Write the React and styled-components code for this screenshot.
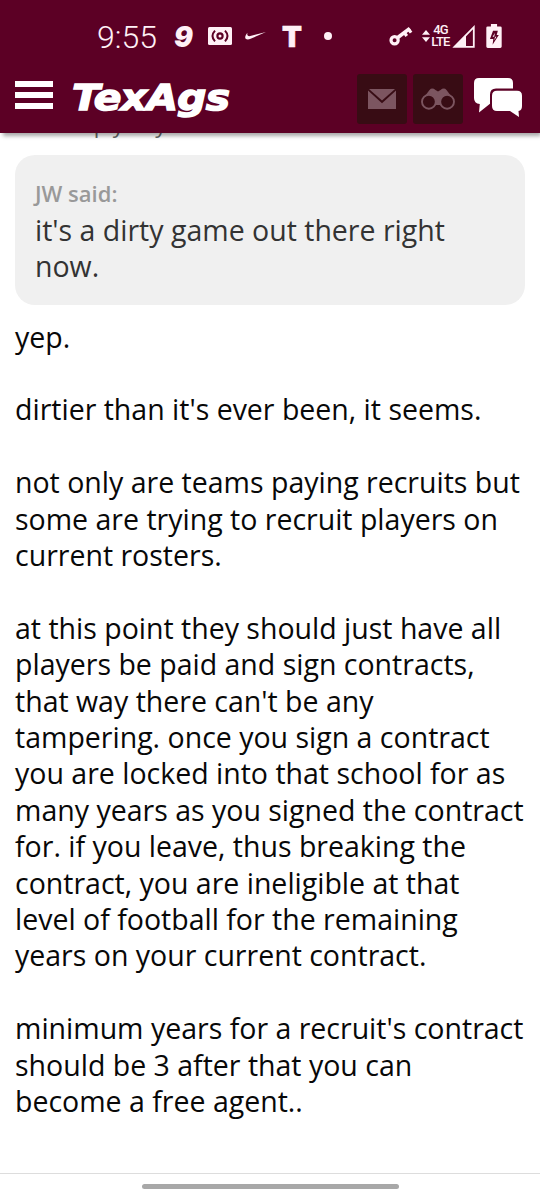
import React from 'react'
import styled, { createGlobalStyle } from 'styled-components'

const paragraphs = [
  ['yep.'],
  ["dirtier than it's ever been, it seems."],
  [
    'not only are teams paying recruits but',
    'some are trying to recruit players on',
    'current rosters.',
  ],
  [
    'at this point they should just have all',
    'players be paid and sign contracts,',
    "that way there can't be any",
    'tampering. once you sign a contract',
    'you are locked into that school for as',
    'many years as you signed the contract',
    'for. if you leave, thus breaking the',
    'contract, you are ineligible at that',
    'level of football for the remaining',
    'years on your current contract.',
  ],
  [
    "minimum years for a recruit's contract",
    'should be 3 after that you can',
    'become a free agent..',
  ],
]

const BroadcastIcon = () => (
  <svg width="24" height="18" viewBox="0 0 24 18" fill="none">
    <rect width="24" height="18" rx="1.5" fill="#fff0f6" />
    <circle cx="12" cy="9" r="2.6" stroke="#5c0025" strokeWidth="2.2" />
    <path d="M7 3.600Q2 9 7 14.400M17 3.600Q22 9 17 14.400" stroke="#5c0025" strokeWidth="2" />
  </svg>
)

const SwooshIcon = () => (
  <svg width="21" height="8" viewBox="0 0 21 8" fill="#fff0f6">
    <path d="M21 0 5.6 6.8C3.300 7.800.4 7.800.2 5.500.1 3.900 1.200 2.200 2.600.7 1.800 2.700 2.300 4.500 5.200 4.100Z" />
  </svg>
)

const KeyIcon = () => (
  <svg width="24" height="22" viewBox="0 0 24 22" fill="none" stroke="#fff0f6">
    <circle cx="5.600" cy="15.200" r="3.600" strokeWidth="3.200" />
    <path d="M8.500 12.800 20.800 3.400" strokeWidth="3.600" />
    <path d="M15.200 7.500l2.600 3.500M19.500 4.200l2.600 3.400" strokeWidth="3.200" />
  </svg>
)

const DataArrows = () => (
  <svg width="8" height="12" viewBox="0 0 8 12" fill="#fff0f6">
    <path d="M4 0l4 4.800H0zM4 12l4-4.800H0z" />
  </svg>
)

const SignalIcon = () => (
  <svg width="23" height="23" viewBox="0 0 23 23">
    <path d="M21.800 2.200V21.800H2.500z" fill="none" stroke="#fff0f6" strokeWidth="1.800" />
    <path d="M14 9.500V22H1.500z" fill="#fff0f6" />
  </svg>
)

const BatteryIcon = () => (
  <svg width="16" height="24" viewBox="0 0 16 25">
    <path d="M4.800 0h6.400v2.500h3.300q1.500 0 1.500 1.500v19.500q0 1.500-1.500 1.500h-13q-1.500 0-1.500-1.500V4q0-1.500 1.500-1.500h3.300z" fill="#fff0f6" />
    <path d="M7 7h5L10.800 11.500h2.200L6.500 21.500l.8-6H3.800z" fill="#5c0025" />
    <path d="M9 9.500 6.500 13.300h2.600L8.300 17l2.200-3.800H8.200z" fill="#fff0f6" />
  </svg>
)

const MailIcon = () => (
  <svg width="28" height="20" viewBox="0 0 28 20" fill="#7c5560">
    <path d="M1 0h26L14 11.500z" />
    <path d="M0 1.600l14 12.600L28 1.600V20H0z" />
  </svg>
)

const BinocularsIcon = () => (
  <svg width="34" height="22" viewBox="0 0 34 22">
    <path d="M2.500 10 8.500 2Q11-.8 14.500 2L17 3.500 19.500 2Q23-.8 25.500 2l6 8-11 3-1.500 4h-4l-1.500-4z" fill="#7c5560" />
    <circle cx="7.900" cy="13.800" r="6.900" fill="#380c14" stroke="#7c5560" strokeWidth="1.900" />
    <circle cx="26.100" cy="13.800" r="6.900" fill="#380c14" stroke="#7c5560" strokeWidth="1.900" />
  </svg>
)

const ChatIcon = () => (
  <svg width="48" height="40" viewBox="0 0 48 40" fill="#fff">
    <path d="M5 0h29q5 0 5 5v5.500H22q-6 0-6 6v9.300L5 34.500 5.800 26Q0 25.500 0 20V5q0-5 5-5z" />
    <path d="M23 12.800h20q5 0 5 5V28q0 4.500-3.500 5l.5 6-9-6H23q-5 0-5-5V17.800q0-5 5-5z" />
  </svg>
)

const App = () => (
  <Screen>
    <GlobalStyle />
    <TopBar>
      <StatusBar>
        <Clock>9:55</Clock>
        <NineBadge>9</NineBadge>
        <StatusItem $left={12}><BroadcastIcon /></StatusItem>
        <StatusItem $left={13}><SwooshIcon /></StatusItem>
        <LetterBadge>T</LetterBadge>
        <Dot />
        <StatusItem $left={57}><KeyIcon /></StatusItem>
        <StatusItem $left={9}><DataArrows /></StatusItem>
        <Network>
          <span>4G</span>
          <span>LTE</span>
        </Network>
        <StatusItem $left={3}><SignalIcon /></StatusItem>
        <StatusItem $left={11}><BatteryIcon /></StatusItem>
      </StatusBar>
      <NavBar>
        <MenuButton aria-label="Menu">
          <MenuLine />
          <MenuLine />
          <MenuLine />
        </MenuButton>
        <Logo>TexAgs</Logo>
        <Actions>
          <SquareButton><MailIcon /></SquareButton>
          <SquareButton><BinocularsIcon /></SquareButton>
          <ChatButton><ChatIcon /></ChatButton>
        </Actions>
      </NavBar>
    </TopBar>
    <Post>
      <ScrolledLine>
        <ReplyLine>In reply any</ReplyLine>
      </ScrolledLine>
      <Quote>
        <QuoteAuthor>JW said:</QuoteAuthor>
        <QuoteText>it's a dirty game out there right<br />now.</QuoteText>
      </Quote>
      <Body>
        {paragraphs.map((lines) => (
          <Paragraph key={lines[0]}>
            {lines.map((line) => (
              <Line key={line}>{line}</Line>
            ))}
          </Paragraph>
        ))}
      </Body>
    </Post>
    <GestureBar>
      <Handle />
    </GestureBar>
  </Screen>
)

const GlobalStyle = createGlobalStyle`
  * {
    box-sizing: border-box;
  }
  body {
    margin: 0;
    background: #fff;
    font-family: 'Open Sans', 'Noto Sans', sans-serif;
  }
  svg {
    display: block;
  }
`

const Screen = styled.div`
  display: flex;
  flex-direction: column;
  width: 540px;
  height: 1200px;
  overflow: hidden;
  background: #fff;
`

const TopBar = styled.header`
  position: relative;
  z-index: 1;
  flex: none;
  height: 133px;
  background: #5c0025;
  color: #fff0f6;
  box-shadow: 2px 4px 4px -1px rgba(0, 0, 0, 0.35);
`

const StatusBar = styled.div`
  display: flex;
  align-items: center;
  height: 72px;
  padding-left: 97px;
`

const StatusItem = styled.div`
  flex: none;
  margin-left: ${({ $left }) => $left}px;
`

const Clock = styled.span`
  width: 61px;
  font-family: Roboto, sans-serif;
  font-size: 32px;
  font-weight: 300;
  line-height: 36px;
  padding-top: 1px;
`

const NineBadge = styled.span`
  width: 22px;
  margin-left: 16px;
  padding-top: 1px;
  font-family: Inter, sans-serif;
  font-size: 28px;
  font-style: italic;
  font-weight: 900;
  line-height: 36px;
`

const LetterBadge = styled.span`
  width: 21px;
  margin-left: 16px;
  font-family: Inter, sans-serif;
  font-size: 29px;
  font-weight: 900;
  line-height: 36px;
  padding-top: 1px;
  -webkit-text-stroke: 0.6px #fff0f6;
`

const Dot = styled.span`
  width: 8px;
  height: 8px;
  margin-left: 21px;
  border-radius: 50%;
  background: #fff0f6;
`

const Network = styled.div`
  display: flex;
  flex-direction: column;
  align-items: center;
  width: 17px;
  margin-left: 2px;
  font-family: Roboto, sans-serif;
  font-size: 13px;
  font-weight: 500;
  line-height: 12.5px;
  letter-spacing: -0.8px;
`

const NavBar = styled.nav`
  display: flex;
  align-items: flex-start;
  height: 61px;
  padding-left: 15px;
`

const MenuButton = styled.button`
  display: flex;
  flex-direction: column;
  gap: 5px;
  margin: 9px 0 0;
  padding: 0;
  border: 0;
  background: none;
`

const MenuLine = styled.span`
  width: 38px;
  height: 6px;
  background: #fff;
`

const Logo = styled.span`
  width: 160px;
  margin: 6px 0 0 19px;
  color: #fff;
  font-family: 'DejaVu Sans', sans-serif;
  font-size: 35px;
  font-style: italic;
  font-weight: 700;
  line-height: 40px;
  letter-spacing: -0.6px;
  transform: scaleX(1.165);
  transform-origin: left;
  -webkit-text-stroke: 1.4px #fff;
`

const Actions = styled.div`
  display: flex;
  gap: 6px;
  margin: 2px 0 0 auto;
  padding-right: 18px;
`

const SquareButton = styled.div`
  display: flex;
  align-items: center;
  justify-content: center;
  width: 50px;
  height: 50px;
  border-radius: 3px;
  background: #380c14;
`

const ChatButton = styled.div`
  margin: 4px 0 0 5px;
`

const Post = styled.main`
  flex: none;
  height: 1040px;
  padding: 0 15px;
`

const ScrolledLine = styled.div`
  height: 22px;
  overflow: hidden;
`

const ReplyLine = styled.div`
  margin-top: -17px;
  padding-left: 32px;
  color: #666;
  font-size: 22px;
  line-height: 16px;
`

const Quote = styled.blockquote`
  height: 150px;
  margin: 0;
  padding: 23px 20px 0;
  border-radius: 20px;
  background: #f0f0f0;
`

const QuoteAuthor = styled.div`
  margin-bottom: 4px;
  color: #999;
  font-size: 22px;
  font-weight: 600;
  line-height: 30px;
`

const QuoteText = styled.div`
  color: #333;
  font-size: 28.5px;
  line-height: 36.4px;
`

const Body = styled.div`
  margin-top: 13.5px;
  color: #080808;
  font-size: 28.5px;
  line-height: 36.4px;
`

const Paragraph = styled.p`
  margin: 0 0 36.4px;
`

const Line = styled.span`
  display: block;
  white-space: nowrap;
`

const GestureBar = styled.footer`
  display: flex;
  justify-content: center;
  height: 27px;
  padding-top: 10px;
  border-top: 1px solid #ddd;
`

const Handle = styled.div`
  width: 257px;
  height: 5px;
  border-radius: 3px;
  background: #a8a8a8;
`

export default App
